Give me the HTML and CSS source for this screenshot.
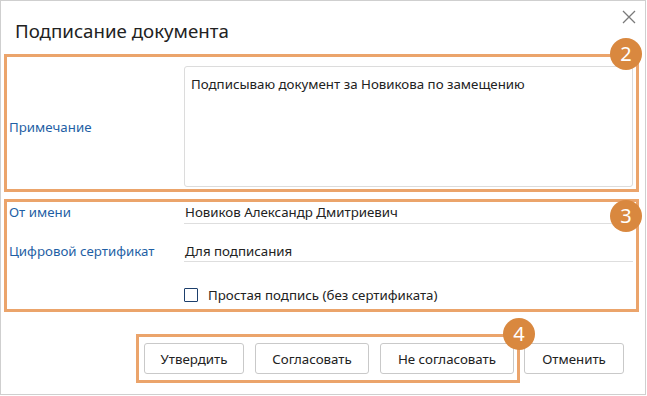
FILE: index.html
```html
<!DOCTYPE html>
<html lang="ru">
<head>
<meta charset="utf-8">
<link rel="stylesheet" href="styles.css">
</head>
<body>
<div class="dialog">
  <div class="header">
    <h1 class="title">Подписание документа</h1>
    <svg class="close" width="14" height="14" viewBox="0 0 14 14"><path d="M1 1L13 13M13 1L1 13" stroke="#7a7a7a" stroke-width="1.3" fill="none"/></svg>
  </div>

  <div class="hl hl-note">
    <div class="note-row">
      <div class="label">Примечание</div>
      <div class="textarea">Подписываю документ за Новикова по замещению</div>
    </div>
    <span class="badge badge-2">2</span>
  </div>

  <div class="hl hl-sign">
    <div class="field-row">
      <div class="label">От имени</div>
      <div class="value">Новиков Александр Дмитриевич</div>
    </div>
    <div class="field-row">
      <div class="label">Цифровой сертификат</div>
      <div class="value">Для подписания</div>
    </div>
    <div class="check-row">
      <span class="checkbox"></span>
      <span class="check-label">Простая подпись (без сертификата)</span>
    </div>
    <span class="badge badge-3">3</span>
  </div>

  <div class="footer">
    <div class="hl hl-actions">
      <button class="btn">Утвердить</button>
      <button class="btn">Согласовать</button>
      <button class="btn">Не согласовать</button>
      <span class="badge badge-4">4</span>
    </div>
    <button class="btn btn-cancel">Отменить</button>
  </div>
</div>
</body>
</html>
```

FILE: styles.css
```css
* { box-sizing: border-box; }
html, body { margin: 0; padding: 0; background: #fff; }
body {
  font-family: "Noto Sans", "Open Sans", sans-serif;
  font-size: 13.3px;
  color: #222;
}
.dialog {
  width: 646px;
  height: 395px;
  border: 1px solid #cfcfcf;
  background: #fff;
  padding: 0 6px 0 3px;
  display: flex;
  flex-direction: column;
}
.header {
  height: 53px;
  position: relative;
  padding: 18px 0 0 11px;
}
.title {
  margin: 0;
  font-size: 18.7px;
  font-weight: 400;
  color: #222;
  line-height: 24px;
}
.close {
  position: absolute;
  right: 3px;
  top: 9px;
}
.hl {
  border: 3px solid #eba46b;
  position: relative;
}
.badge {
  position: absolute;
  width: 32px;
  height: 32px;
  border-radius: 50%;
  background: #d9883f;
  color: #fff;
  font-size: 20px;
  line-height: 32px;
  text-align: center;
}
.label {
  color: #1f5fa5;
  width: 177px;
  padding-left: 2px;
  flex: none;
}
.hl-note {
  height: 138px;
  padding: 9px 3px 2px 0;
}
.note-row {
  display: flex;
  align-items: center;
  height: 100%;
}
.textarea {
  flex: 1;
  height: 100%;
  border: 1px solid #dcdcdc;
  border-radius: 3px;
  padding: 8px 6px;
  line-height: 18px;
  align-self: stretch;
}
.badge-2 { right: -6px; top: -19px; }

.hl-sign {
  margin-top: 7px;
  height: 113px;
  padding: 0 3px 0 0;
}
.field-row {
  display: flex;
  align-items: center;
}
.field-row .value {
  flex: 1;
  height: 100%;
  padding: 4px 2px 0 1px;
  border-bottom: 1px solid #dedede;
  line-height: 14px;
}
.field-row:first-child { height: 22px; }
.field-row:first-child .label { padding-bottom: 2px; }
.field-row:first-child .value { padding-top: 3px; }
.field-row:nth-child(2) { height: 38px; }
.field-row:nth-child(2) .value { padding-top: 20px; }
.field-row:nth-child(2) .label { align-self: flex-end; padding-bottom: 2px; }
.check-row {
  display: flex;
  align-items: center;
  padding-left: 177px;
  margin-top: 25px;
  height: 16px;
}
.checkbox {
  width: 14px;
  height: 14px;
  border: 1.5px solid #1d3f6c;
  border-radius: 1px;
  margin-right: 10px;
}
.check-label { line-height: 16px; }
.badge-3 { right: -6px; top: -2px; }

.footer {
  margin-top: 22px;
  display: flex;
  justify-content: flex-end;
  align-items: flex-start;
  gap: 4px;
  padding-right: 15px;
}
.hl-actions {
  display: flex;
  gap: 11px;
  padding: 6px 3px 6px 5px;
}
.btn {
  font-family: inherit;
  font-size: 13.3px;
  color: #222;
  background: #fff;
  border: 1px solid #c9c9c9;
  border-radius: 3px;
  height: 31px;
  padding: 0 10px;
  cursor: pointer;
}
.hl-actions .btn:nth-child(1) { width: 100px; }
.hl-actions .btn:nth-child(2) { width: 114px; }
.hl-actions .btn:nth-child(3) { width: 134px; }
.btn-cancel { width: 100px; margin-top: 9px; }
.badge-4 { right: -18px; top: -19px; }
```
